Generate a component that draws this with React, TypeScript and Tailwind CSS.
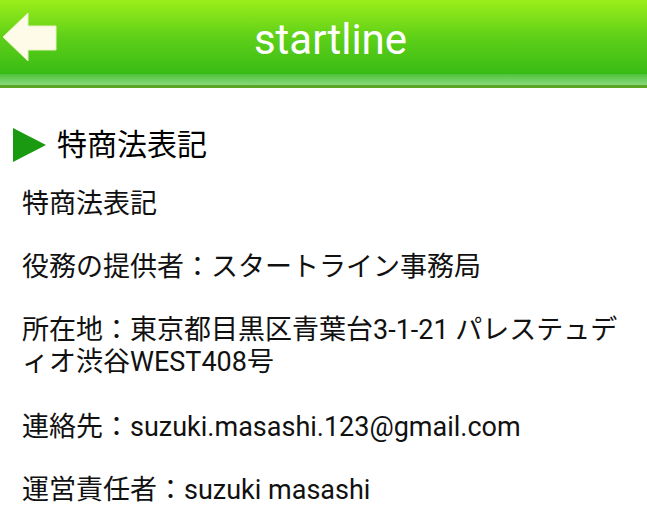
import React from "react";

export default function App() {
  const font = { fontFamily: "Roboto, 'Noto Sans CJK JP', sans-serif" };
  return (
    <div className="w-[647px] h-[511px] bg-white overflow-hidden" style={font}>
      <div className="relative h-[88px] flex flex-col">
        <div className="h-[74px] bg-gradient-to-b from-[#9aee1a] via-[#5ed018] to-[#38bb16]"></div>
        <div className="h-[11px] bg-gradient-to-b from-[#4ec33a] to-[#86d87a]"></div>
        <div className="h-[3px] bg-[#5aa524]"></div>
        <div className="absolute inset-0 flex items-center justify-center pb-[8px] pl-[14px]">
          <span className="text-white text-[42px] leading-none" style={font}>startline</span>
        </div>
        <svg className="absolute left-[2px] top-[12px]" width="56" height="51" viewBox="0 0 56 51">
          <polygon points="1,25 26,1 26,14 54,14 54,38 26,38 26,49" fill="#fefce8" stroke="#e8f0c0" strokeWidth="1" />
        </svg>
      </div>
      <div className="flex items-center mt-[40px] ml-[13px] gap-[11px]">
        <svg width="33" height="34" viewBox="0 0 33 34">
          <polygon points="0,0 33,17 0,34" fill="#1a9a10" />
        </svg>
        <span className="text-[30px] leading-none text-black">特商法表記</span>
      </div>
      <div className="px-[22px] mt-[26px] text-[27px] leading-[32px] text-[#111] flex flex-col gap-[31px]">
        <p>特商法表記</p>
        <p>役務の提供者：スタートライン事務局</p>
        <p>所在地：東京都目黒区青葉台3-1-21 パレステュディオ渋谷WEST408号</p>
        <p className="mt-[2px]">連絡先：suzuki.masashi.123@gmail.com</p>
        <p>運営責任者：suzuki masashi</p>
      </div>
    </div>
  );
}
